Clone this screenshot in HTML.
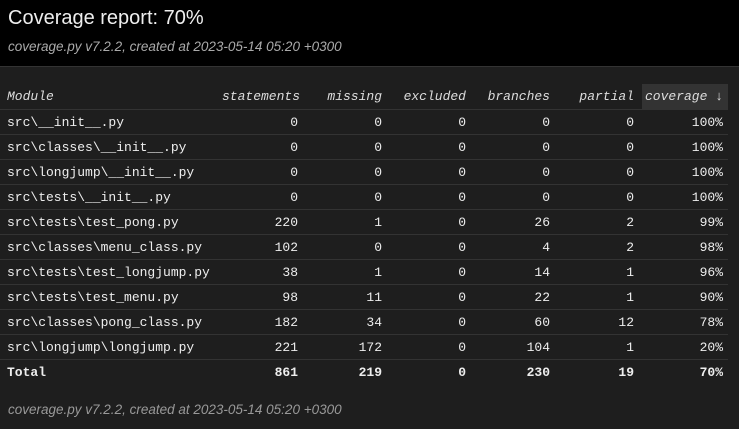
<!DOCTYPE html>
<html><head><style>
body{margin:0;background:#1e1e1e;color:#eee;font-family:"Liberation Sans",sans-serif;width:739px;height:429px;overflow:hidden}
header{background:#000;height:67px;border-bottom:1px solid #333;box-sizing:border-box;position:relative}
h1{margin:0;position:absolute;left:8px;top:7px;font-size:20px;font-weight:normal;color:#eee}
.sub{position:absolute;left:8px;top:39px;font-size:13.5px;font-style:italic;color:#aaa}
table{position:absolute;top:84px;left:0;border-collapse:collapse;table-layout:fixed;width:728px;font-family:"Liberation Mono",monospace;font-size:13px;color:#eee}
td,th{height:24px;padding:0 8px 0 0;border-bottom:1px solid #333;text-align:right;white-space:pre;overflow:hidden}
th{font-weight:normal;font-style:italic;color:#ddd;height:25px}
td:first-child,th:first-child{text-align:left;padding-left:7px}
th.cov,td.cov{padding-right:5px}
th.cov{background:#333}
tr.total td{font-weight:bold;border-bottom:none}
.foot{position:absolute;left:8px;top:402px;font-size:13.5px;font-style:italic;color:#999}
</style></head><body>
<header><h1>Coverage report: 70%</h1><div class="sub">coverage.py v7.2.2, created at 2023-05-14 05:20 +0300</div></header>
<table>
<colgroup><col style="width:222px"><col style="width:84px"><col style="width:84px"><col style="width:84px"><col style="width:84px"><col style="width:84px"><col style="width:86px"></colgroup>
<tr><th>Module</th><th>statements</th><th>missing</th><th>excluded</th><th>branches</th><th>partial</th><th class="cov">coverage ↓</th></tr>
<tr><td>src\__init__.py</td><td>0</td><td>0</td><td>0</td><td>0</td><td>0</td><td class="cov">100%</td></tr>
<tr><td>src\classes\__init__.py</td><td>0</td><td>0</td><td>0</td><td>0</td><td>0</td><td class="cov">100%</td></tr>
<tr><td>src\longjump\__init__.py</td><td>0</td><td>0</td><td>0</td><td>0</td><td>0</td><td class="cov">100%</td></tr>
<tr><td>src\tests\__init__.py</td><td>0</td><td>0</td><td>0</td><td>0</td><td>0</td><td class="cov">100%</td></tr>
<tr><td>src\tests\test_pong.py</td><td>220</td><td>1</td><td>0</td><td>26</td><td>2</td><td class="cov">99%</td></tr>
<tr><td>src\classes\menu_class.py</td><td>102</td><td>0</td><td>0</td><td>4</td><td>2</td><td class="cov">98%</td></tr>
<tr><td>src\tests\test_longjump.py</td><td>38</td><td>1</td><td>0</td><td>14</td><td>1</td><td class="cov">96%</td></tr>
<tr><td>src\tests\test_menu.py</td><td>98</td><td>11</td><td>0</td><td>22</td><td>1</td><td class="cov">90%</td></tr>
<tr><td>src\classes\pong_class.py</td><td>182</td><td>34</td><td>0</td><td>60</td><td>12</td><td class="cov">78%</td></tr>
<tr><td>src\longjump\longjump.py</td><td>221</td><td>172</td><td>0</td><td>104</td><td>1</td><td class="cov">20%</td></tr>
<tr class="total"><td>Total</td><td>861</td><td>219</td><td>0</td><td>230</td><td>19</td><td class="cov">70%</td></tr>
</table>
<div class="foot">coverage.py v7.2.2, created at 2023-05-14 05:20 +0300</div>
</body></html>
